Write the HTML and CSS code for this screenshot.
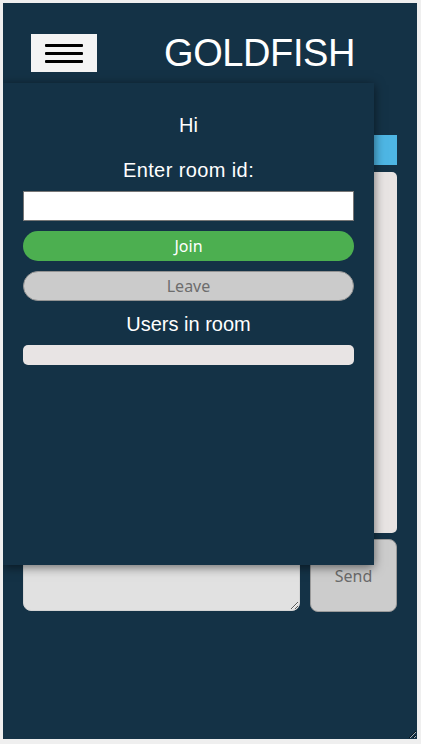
FILE: index.html
```html
<!DOCTYPE html>
<html>
<head>
<meta charset="utf-8">
<link rel="stylesheet" href="styles.css">
</head>
<body>
<div class="app">
  <header class="header">
    <button class="menu-btn" aria-label="menu">
      <span class="bar"></span><span class="bar"></span><span class="bar"></span>
    </button>
    <h1 class="title">GOLDFISH</h1>
  </header>
  <main class="chat">
    <div class="room-bar"></div>
    <div class="messages"></div>
    <div class="composer">
      <textarea class="msg-input"></textarea>
      <button class="send-btn">Send</button>
    </div>
  </main>
  <aside class="drawer">
    <p class="greet">Hi</p>
    <p class="label">Enter room id:</p>
    <input class="room-input" type="text">
    <button class="btn join">Join</button>
    <button class="btn leave">Leave</button>
    <p class="users-title">Users in room</p>
    <div class="users-list"></div>
  </aside>
</div>
</body>
</html>
```
FILE: styles.css
```css
* { box-sizing: border-box; }
html, body { margin: 0; padding: 0; }
body {
  background: #efefef;
  width: 421px;
  height: 744px;
  overflow: hidden;
  padding: 3px 0 0 3px;
}
.app {
  position: relative;
  width: 414px;
  height: 736px;
  background: #143246;
  overflow: hidden;
  resize: both;
  padding: 31px 20px 0 20px;
  font-family: "Liberation Sans", Arial, sans-serif;
}
.header {
  display: flex;
  align-items: center;
  height: 38px;
  padding-left: 8px;
}
.menu-btn {
  width: 66px;
  height: 38px;
  background: #f4f4f4;
  border: none;
  padding: 0 14px;
  display: flex;
  flex-direction: column;
  justify-content: center;
  gap: 5px;
  margin: 0;
}
.bar {
  display: block;
  width: 38px;
  height: 3px;
  background: #000;
  border-radius: 1px;
}
.title {
  margin: 0 0 0 67px;
  color: #fff;
  font-weight: normal;
  font-size: 38px;
  line-height: 38px;
  letter-spacing: -0.4px;
}
.chat {
  display: flex;
  flex-direction: column;
  margin-top: 63px;
}
.room-bar {
  height: 30px;
  background: #4eb6e4;
}
.messages {
  margin-top: 7px;
  height: 361px;
  background: #e8e4e3;
  border-radius: 5px;
}
.composer {
  display: flex;
  gap: 10px;
  margin-top: 6px;
  align-items: flex-start;
}
.msg-input {
  width: 277px;
  height: 71px;
  margin-top: 1px;
  background: #e1e1e1;
  border: 1px solid #d4d4d4;
  border-radius: 8px;
  outline: none;
}
.send-btn {
  width: 87px;
  height: 73px;
  background: #cccccc;
  border: 1px solid #9a9a9a;
  border-radius: 8px;
  color: #6a6a6a;
  font-family: "Noto Sans", sans-serif;
  font-size: 16px;
  padding: 0;
}
.drawer {
  position: absolute;
  left: 0;
  top: 80px;
  width: 371px;
  height: 482px;
  background: #143246;
  box-shadow: 0 2px 10px rgba(0, 0, 0, 0.55);
  padding: 30px 20px 0 20px;
  display: flex;
  flex-direction: column;
  color: #fff;
  text-align: center;
}
.drawer p {
  margin: 0;
  font-size: 20px;
  line-height: 24px;
}
.label { margin-top: 21px !important; letter-spacing: 0.4px; }
.room-input {
  margin-top: 9px;
  height: 30px;
  width: 100%;
  border: 1px solid #767676;
  background: #fff;
  outline: none;
}
.btn {
  margin-top: 10px;
  height: 30px;
  width: 100%;
  border-radius: 15px;
  font-family: "Noto Sans", sans-serif;
  font-size: 16px;
  padding: 0;
}
.join {
  background: #4caf50;
  border: none;
  color: #fff;
}
.leave {
  background: #cbcbcb;
  border: 1px solid #939393;
  color: #6d6d6d;
}
.users-title { margin-top: 11px !important; }
.users-list {
  margin-top: 9px;
  height: 20px;
  background: #e8e4e4;
  border-radius: 5px;
}
```
